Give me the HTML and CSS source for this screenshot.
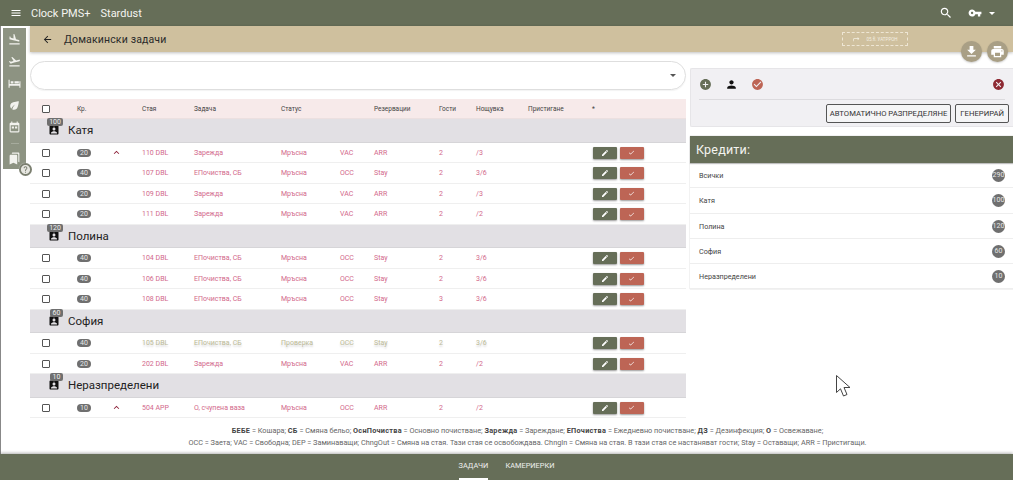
FILE: index.html
```html
<!DOCTYPE html>
<html lang="bg">
<head>
<meta charset="utf-8">
<title>Домакински задачи</title>
<link rel="stylesheet" href="styles.css">
</head>
<body>
<svg class="defs" width="0" height="0" aria-hidden="true">
<symbol id="i-menu" viewBox="0 0 24 24"><path d="M3 18h18v-2H3v2zm0-5h18v-2H3v2zm0-7v2h18V6H3z"/></symbol>
<symbol id="i-search" viewBox="0 0 24 24"><path d="M15.5 14h-.79l-.28-.27C15.41 12.59 16 11.11 16 9.5 16 5.91 13.09 3 9.5 3S3 5.91 3 9.5 5.91 16 9.5 16c1.61 0 3.09-.59 4.23-1.57l.27.28v.79l5 4.99L20.49 19l-4.99-5zm-6 0C7.01 14 5 11.99 5 9.5S7.01 5 9.5 5 14 7.01 14 9.5 11.99 14 9.5 14z"/></symbol>
<symbol id="i-key" viewBox="0 0 24 24"><path d="M12.65 10C11.83 7.67 9.61 6 7 6c-3.31 0-6 2.69-6 6s2.69 6 6 6c2.61 0 4.83-1.67 5.65-4H17v4h4v-4h2v-4H12.65zM7 14c-1.1 0-2-.9-2-2s.9-2 2-2 2 .9 2 2-.9 2-2 2z"/></symbol>
<symbol id="i-land" viewBox="0 0 24 24"><path d="M2.5 19h19v2h-19zm7.18-5.73l4.35 1.16 5.31 1.42c.8.21 1.62-.26 1.84-1.06.21-.8-.26-1.62-1.06-1.84l-5.31-1.42-2.76-9.02L10.12 2v8.28L5.15 8.95l-.93-2.32-1.45-.39v5.17l1.6.43 5.31 1.43z"/></symbol>
<symbol id="i-takeoff" viewBox="0 0 24 24"><path d="M2.5 19h19v2h-19zm19.57-9.36c-.21-.8-1.04-1.28-1.84-1.06L14.92 10l-6.9-6.43-1.93.51 4.14 7.17-4.97 1.33-1.97-1.54-1.45.39 1.82 3.16.77 1.33 1.6-.43 5.31-1.42 4.35-1.16L21 11.49c.81-.23 1.28-1.05 1.07-1.85z"/></symbol>
<symbol id="i-bed" viewBox="0 0 24 24"><path d="M1 5h2v8h18V8h2v12h-2v-4H3v4H1zM5 8h5v4H5zM12 8h8v4h-8z"/></symbol>
<symbol id="i-eco" viewBox="0 0 24 24"><path d="M6.050 8.050c-2.730 2.730-2.730 7.150-.02 9.880 1.470-3.400 4.090-6.240 7.360-7.930-2.770 2.340-4.710 5.610-5.390 9.320 2.600 1.230 5.800.78 7.950-1.370C19.430 14.470 20 4 20 4S9.530 4.570 6.050 8.050z"/></symbol>
<symbol id="i-event" viewBox="0 0 24 24"><path d="M19 3h-1V1h-2v2H8V1H6v2H5c-1.110 0-2 .9-2 2v14c0 1.100.89 2 2 2h14c1.100 0 2-.9 2-2V5c0-1.100-.9-2-2-2zm0 16H5V8h14v11zM7 10h4v4H7zm6 0h4v4h-4z"/></symbol>
<symbol id="i-book" viewBox="0 0 24 24"><path d="M19 18l2 1V3c0-1.100-.9-2-2-2H8.990C7.890 1 7 1.900 7 3h10c1.100 0 2 .9 2 2v13zM15 5H5c-1.100 0-2 .9-2 2v16l7-3 7 3V7c0-1.100-.9-2-2-2z"/></symbol>
<symbol id="i-help" viewBox="0 0 24 24"><path d="M12 2C6.480 2 2 6.480 2 12s4.480 10 10 10 10-4.480 10-10S17.520 2 12 2zm1 17h-2v-2h2v2zm2.070-7.750l-.9.92C13.450 12.900 13 13.500 13 15h-2v-.5c0-1.100.45-2.100 1.170-2.830l1.240-1.260c.37-.36.59-.86.59-1.410 0-1.100-.9-2-2-2s-2 .9-2 2H8c0-2.210 1.790-4 4-4s4 1.790 4 4c0 .88-.36 1.680-.93 2.250z"/></symbol>
<symbol id="i-back" viewBox="0 0 24 24"><path d="M20 11H7.830l5.590-5.590L12 4l-8 8 8 8 1.410-1.410L7.830 13H20v-2z"/></symbol>
<symbol id="i-turn" viewBox="0 0 24 24"><path d="M3 19v-5c0-2.200 1.800-4 4-4h10V6l5 5-5 5v-4H7c-1.100 0-2 .9-2 2v5z"/></symbol>
<symbol id="i-get" viewBox="0 0 24 24"><path d="M19 9h-4V3H9v6H5l7 7 7-7zM5 18v2h14v-2H5z"/></symbol>
<symbol id="i-print" viewBox="0 0 24 24"><path d="M19 8H5c-1.660 0-3 1.340-3 3v6h4v4h12v-4h4v-6c0-1.660-1.340-3-3-3zm-3 11H8v-5h8v5zm3-7c-.55 0-1-.45-1-1s.45-1 1-1 1 .45 1 1-.45 1-1 1zm-1-9H6v4h12V3z"/></symbol>
<symbol id="i-add" viewBox="0 0 24 24"><path d="M12 2C6.480 2 2 6.480 2 12s4.480 10 10 10 10-4.480 10-10S17.520 2 12 2zm5 11h-4v4h-2v-4H7v-2h4V7h2v4h4v2z"/></symbol>
<symbol id="i-person" viewBox="0 0 24 24"><path d="M12 12c2.210 0 4-1.790 4-4s-1.790-4-4-4-4 1.790-4 4 1.790 4 4 4zm0 2c-2.670 0-8 1.340-8 4v2h16v-2c0-2.660-5.330-4-8-4z"/></symbol>
<symbol id="i-okc" viewBox="0 0 24 24"><path d="M12 2C6.480 2 2 6.480 2 12s4.480 10 10 10 10-4.480 10-10S17.520 2 12 2zm-2 15l-5-5 1.410-1.410L10 14.170l7.590-7.590L19 8l-9 9z"/></symbol>
<symbol id="i-cancel" viewBox="0 0 24 24"><path d="M12 2C6.470 2 2 6.470 2 12s4.470 10 10 10 10-4.470 10-10S17.530 2 12 2zm5 13.590L15.590 17 12 13.410 8.410 17 7 15.590 10.590 12 7 8.410 8.410 7 12 10.590 15.590 7 17 8.410 13.410 12 17 15.590z"/></symbol>
<symbol id="i-up" viewBox="0 0 24 24"><path d="M12 8l-6 6 1.410 1.410L12 10.830l4.590 4.580L18 14z"/></symbol>
<symbol id="i-edit" viewBox="0 0 24 24"><path d="M3 17.250V21h3.750L17.810 9.940l-3.750-3.750L3 17.250zM20.710 7.040c.39-.39.39-1.020 0-1.410l-2.340-2.340c-.39-.39-1.020-.39-1.410 0l-1.830 1.830 3.750 3.750 1.830-1.830z"/></symbol>
<symbol id="i-check" viewBox="0 0 24 24"><path d="M9 16.170L4.830 12l-1.420 1.410L9 19 21 7l-1.410-1.410z"/></symbol>
<symbol id="i-assign" viewBox="0 0 24 24"><path d="M19 3h-4.180C14.400 1.840 13.300 1 12 1c-1.300 0-2.400.84-2.820 2H5c-1.100 0-2 .9-2 2v14c0 1.100.9 2 2 2h14c1.100 0 2-.9 2-2V5c0-1.100-.9-2-2-2zm-7 0c.55 0 1 .45 1 1s-.45 1-1 1-1-.45-1-1 .45-1 1-1zm0 4c1.660 0 3 1.340 3 3s-1.340 3-3 3-3-1.340-3-3 1.340-3 3-3zm6 12H6v-1.400c0-2 4-3.100 6-3.100s6 1.100 6 3.100V19z"/></symbol>
</svg>

<header class="topbar">
  <svg class="ico ico-menu"><use href="#i-menu"/></svg>
  <span class="brand">Clock PMS+</span>
  <span class="brand brand-hotel">Stardust</span>
  <span class="spacer"></span>
  <svg class="ico ico-search"><use href="#i-search"/></svg>
  <svg class="ico ico-key"><use href="#i-key"/></svg>
  <span class="caret caret-white"></span>
</header>

<div class="shell">
  <nav class="rail-wrap">
    <div class="rail">
      <svg class="ico"><use href="#i-land"/></svg>
      <svg class="ico"><use href="#i-takeoff"/></svg>
      <svg class="ico"><use href="#i-bed"/></svg>
      <svg class="ico"><use href="#i-eco"/></svg>
      <svg class="ico"><use href="#i-event"/></svg>
      <span class="rail-sep"></span>
      <svg class="ico"><use href="#i-book"/></svg>
      <span class="rail-help"><svg class="ico-help"><use href="#i-help"/></svg></span>
    </div>
  </nav>

  <div class="page">
    <div class="subbar">
      <svg class="ico ico-back"><use href="#i-back"/></svg>
      <h1 class="title">Домакински задачи</h1>
      <span class="spacer"></span>
      <span class="version"><svg class="ico-turn"><use href="#i-turn"/></svg>05.fl. УАТРРОН</span>
    </div>
    <div class="fabs">
      <span class="fab"><svg class="ico"><use href="#i-get"/></svg></span>
      <span class="fab"><svg class="ico"><use href="#i-print"/></svg></span>
    </div>

    <div class="columns">
      <main class="left">
        <div class="select"><span class="caret caret-dark"></span></div>
        <div class="table">
          <div class="row head">
            <span class="box"></span><span>Кр.</span><span></span><span>Стая</span><span>Задача</span><span>Статус</span><span></span><span>Резервации</span><span>Гости</span><span>Нощувка</span><span>Пристигане</span><span>*</span>
          </div>

          <div class="group"><span class="g-icon"><svg class="ico"><use href="#i-assign"/></svg><b class="g-badge">100</b></span>Катя</div>
          <div class="row"><span class="box"></span><span><b class="pill">20</b></span><span><svg class="chev"><use href="#i-up"/></svg></span><span>110 DBL</span><span>Зарежда</span><span>Мръсна</span><span>VAC</span><span>ARR</span><span>2</span><span>/3</span><span></span><span class="acts"><span class="btn btn-edit"><svg><use href="#i-edit"/></svg></span><span class="btn btn-ok"><svg><use href="#i-check"/></svg></span></span></div>
          <div class="row"><span class="box"></span><span><b class="pill">40</b></span><span></span><span>107 DBL</span><span>ЕПочиства, СБ</span><span>Мръсна</span><span>OCC</span><span>Stay</span><span>2</span><span>3/6</span><span></span><span class="acts"><span class="btn btn-edit"><svg><use href="#i-edit"/></svg></span><span class="btn btn-ok"><svg><use href="#i-check"/></svg></span></span></div>
          <div class="row"><span class="box"></span><span><b class="pill">20</b></span><span></span><span>109 DBL</span><span>Зарежда</span><span>Мръсна</span><span>VAC</span><span>ARR</span><span>2</span><span>/3</span><span></span><span class="acts"><span class="btn btn-edit"><svg><use href="#i-edit"/></svg></span><span class="btn btn-ok"><svg><use href="#i-check"/></svg></span></span></div>
          <div class="row"><span class="box"></span><span><b class="pill">20</b></span><span></span><span>111 DBL</span><span>Зарежда</span><span>Мръсна</span><span>VAC</span><span>ARR</span><span>2</span><span>/2</span><span></span><span class="acts"><span class="btn btn-edit"><svg><use href="#i-edit"/></svg></span><span class="btn btn-ok"><svg><use href="#i-check"/></svg></span></span></div>

          <div class="group"><span class="g-icon"><svg class="ico"><use href="#i-assign"/></svg><b class="g-badge">120</b></span>Полина</div>
          <div class="row"><span class="box"></span><span><b class="pill">40</b></span><span></span><span>104 DBL</span><span>ЕПочиства, СБ</span><span>Мръсна</span><span>OCC</span><span>Stay</span><span>2</span><span>3/6</span><span></span><span class="acts"><span class="btn btn-edit"><svg><use href="#i-edit"/></svg></span><span class="btn btn-ok"><svg><use href="#i-check"/></svg></span></span></div>
          <div class="row"><span class="box"></span><span><b class="pill">40</b></span><span></span><span>106 DBL</span><span>ЕПочиства, СБ</span><span>Мръсна</span><span>OCC</span><span>Stay</span><span>2</span><span>3/6</span><span></span><span class="acts"><span class="btn btn-edit"><svg><use href="#i-edit"/></svg></span><span class="btn btn-ok"><svg><use href="#i-check"/></svg></span></span></div>
          <div class="row"><span class="box"></span><span><b class="pill">40</b></span><span></span><span>108 DBL</span><span>ЕПочиства, СБ</span><span>Мръсна</span><span>OCC</span><span>Stay</span><span>3</span><span>3/6</span><span></span><span class="acts"><span class="btn btn-edit"><svg><use href="#i-edit"/></svg></span><span class="btn btn-ok"><svg><use href="#i-check"/></svg></span></span></div>

          <div class="group"><span class="g-icon"><svg class="ico"><use href="#i-assign"/></svg><b class="g-badge">60</b></span>София</div>
          <div class="row row-check"><span class="box"></span><span><b class="pill">40</b></span><span></span><span>105 DBL</span><span>ЕПочиства, СБ</span><span>Проверка</span><span>OCC</span><span>Stay</span><span>2</span><span>3/6</span><span></span><span class="acts"><span class="btn btn-edit"><svg><use href="#i-edit"/></svg></span><span class="btn btn-ok"><svg><use href="#i-check"/></svg></span></span></div>
          <div class="row"><span class="box"></span><span><b class="pill">20</b></span><span></span><span>202 DBL</span><span>Зарежда</span><span>Мръсна</span><span>VAC</span><span>ARR</span><span>2</span><span>/2</span><span></span><span class="acts"><span class="btn btn-edit"><svg><use href="#i-edit"/></svg></span><span class="btn btn-ok"><svg><use href="#i-check"/></svg></span></span></div>

          <div class="group"><span class="g-icon"><svg class="ico"><use href="#i-assign"/></svg><b class="g-badge">10</b></span>Неразпределени</div>
          <div class="row"><span class="box"></span><span><b class="pill">10</b></span><span><svg class="chev"><use href="#i-up"/></svg></span><span>504 APP</span><span>О, счупена ваза</span><span>Мръсна</span><span>OCC</span><span>ARR</span><span>2</span><span>/2</span><span></span><span class="acts"><span class="btn btn-edit"><svg><use href="#i-edit"/></svg></span><span class="btn btn-ok"><svg><use href="#i-check"/></svg></span></span></div>
        </div>
      </main>

      <aside class="right">
        <div class="tools">
          <div class="tool-icons">
            <svg class="tool c-add"><use href="#i-add"/></svg>
            <svg class="tool c-person"><use href="#i-person"/></svg>
            <svg class="tool c-ok"><use href="#i-okc"/></svg>
            <span class="spacer"></span>
            <svg class="tool c-cancel"><use href="#i-cancel"/></svg>
          </div>
          <div class="tool-btns">
            <button class="outline">АВТОМАТИЧНО РАЗПРЕДЕЛЯНЕ</button>
            <button class="outline outline-gen">ГЕНЕРИРАЙ</button>
          </div>
        </div>
        <div class="credits">
          <div class="credits-head">Кредити:</div>
          <div class="credit"><span>Всички</span><b class="dot">290</b></div>
          <div class="credit"><span>Катя</span><b class="dot">100</b></div>
          <div class="credit"><span>Полина</span><b class="dot">120</b></div>
          <div class="credit"><span>София</span><b class="dot">60</b></div>
          <div class="credit"><span>Неразпределени</span><b class="dot">10</b></div>
        </div>
      </aside>
    </div>

    <div class="legend">
      <p><b>БЕБЕ</b> = Кошара; <b>СБ</b> = Смяна бельо; <b>ОснПочиства</b> = Основно почистване; <b>Зарежда</b> = Зареждане; <b>ЕПочиства</b> = Ежедневно почистване; <b>ДЗ</b> = Дезинфекция; <b>О</b> = Освежаване;</p>
      <p>OCC = Заета; VAC = Свободна; DEP = Заминаващи; ChngOut = Смяна на стая. Тази стая се освобождава. ChngIn = Смяна на стая. В тази стая се настаняват гости; Stay = Оставащи; ARR = Пристигащи.</p>
    </div>
  </div>
</div>

<footer class="tabs">
  <span class="tab tab-on">ЗАДАЧИ</span>
  <span class="tab">КАМЕРИЕРКИ</span>
</footer>

<svg class="pointer" width="18" height="24" viewBox="0 0 18 24" aria-hidden="true"><path d="M1.500 1.500V18.500L5.500 14.800L8.500 22L12 20.500L9 13.500H15z" fill="#fff" stroke="#444" stroke-width="1" stroke-linejoin="round"/></svg>
</body>
</html>
```
FILE: styles.css
```css
* { box-sizing: border-box; }
html, body { margin: 0; height: 480px; overflow: hidden; }
html { background: #fff; }
body {
  position: relative;
  display: flex;
  flex-direction: column;
  width: 1013px;
  font-family: Roboto, "Liberation Sans", sans-serif;
  background: #fff;
  color: #333;
  opacity: .999;
}
.defs { position: absolute; }
.spacer { flex: 1; }
.ico { width: 100%; height: 100%; fill: currentColor; display: block; }

.topbar {
  height: 26px;
  flex: none;
  display: flex;
  align-items: center;
  background: #666e58;
  color: #fff;
  padding: 0 17px 0 10px;
}
.ico-menu { width: 12px; height: 12px; margin-right: 9px; }
.brand { font-size: 11px; color: #f4f4f0; }
.brand-hotel { margin-left: 10px; }
.ico-search { width: 14px; height: 14px; margin-right: 15px; }
.ico-key { width: 14px; height: 14px; margin-right: 7px; }
.caret { width: 0; height: 0; border-left: 3px solid transparent; border-right: 3px solid transparent; border-top: 3px solid #fff; }
.caret-white { margin-right: 1px; }
.caret-dark { border-top-color: #555; }

.shell { flex: 1; display: flex; min-height: 0; border-left: 1px solid #888; }
.rail-wrap { width: 29px; flex: none; padding: 2px 0 0 2px; }
.rail {
  position: relative;
  width: 23px;
  height: 141px;
  background: #8d9382;
  color: #f2f2ee;
  display: flex;
  flex-direction: column;
  align-items: center;
  padding-top: 4.500px;
  gap: 9px;
}
.rail .ico { width: 13px; height: 13px; flex: none; }
.rail-sep { width: 8px; height: 1px; background: #a6ab9d; flex: none; margin-bottom: -1px; }
.rail-help {
  position: absolute;
  right: -5.500px;
  bottom: -7px;
  width: 13px;
  height: 13px;
  border-radius: 50%;
  background: #7b7f70;
  box-shadow: 0 0 1px rgba(255,255,255,.8);
  display: flex;
  align-items: center;
  justify-content: center;
}
.ico-help { width: 11px; height: 11px; fill: #e6e6e0; }

.page { flex: 1; min-width: 0; display: flex; flex-direction: column; position: relative; }
.subbar {
  height: 26px;
  flex: none;
  display: flex;
  align-items: center;
  background: #cfc09e;
  box-shadow: 0 1px 3px rgba(0,0,0,.25);
  padding: 0 105px 0 12px;
}
.ico-back { width: 11px; height: 11px; color: #222; margin-right: 11px; }
.title { margin: 0; font-size: 10.500px; font-weight: 400; color: #2a2a2a; letter-spacing: .15px; }
.version {
  width: 66px;
  height: 14px;
  border: 1px dashed #eee6d4;
  border-radius: 1px;
  color: #f4efe2;
  font-size: 4.500px;
  display: flex;
  align-items: center;
  justify-content: center;
  gap: 6px;
}
.ico-turn { width: 8px; height: 8px; fill: #f4efe2; }
.fabs { position: absolute; top: 15px; right: 5px; display: flex; gap: 5px; }
.fab {
  width: 21px;
  height: 21px;
  border-radius: 50%;
  background: #a99f85;
  color: #fff;
  padding: 3px;
  box-shadow: 0 1px 2px rgba(0,0,0,.2);
}

.columns { display: flex; gap: 4px; flex: 1; min-height: 0; }
.left { width: 656px; flex: none; padding-top: 9px; }
.select {
  height: 29px;
  border: 1px solid #dedede;
  border-radius: 15px;
  display: flex;
  align-items: center;
  justify-content: flex-end;
  padding-right: 9px;
  margin-bottom: 9px;
  box-shadow: 0 1px 1px rgba(0,0,0,.05);
}

.table { display: flex; flex-direction: column; }
.row {
  display: grid;
  grid-template-columns: 35px 39px 26px 52px 87px 59px 34px 65px 37px 52px 64px 1fr;
  align-items: center;
  height: 20.500px;
  padding-left: 12px;
  padding-top: 1px;
  font-size: 7px;
  color: #d2688a;
  border-bottom: 1px solid #efefef;
}
.head {
  height: 20px;
  padding-top: 0;
  background: #f7eaea;
  color: #444;
  font-size: 6.500px;
  border-bottom: 1px solid #ece0e0;
}
.row-check { color: #bdbb97; text-shadow: 0 2px 2px rgba(0,0,0,.18); }
.box { width: 8px; height: 8px; border: 1px solid #555; border-radius: 1px; background: #fff; }
.pill {
  display: block;
  width: 14px;
  height: 8px;
  border-radius: 4px;
  background: #6f6f6f;
  color: #e8e8e8;
  font-size: 7px;
  font-weight: 400;
  line-height: 8px;
  text-align: center;
  text-shadow: none;
}
.chev { display: block; width: 11px; height: 11px; fill: #8a1c35; margin-left: -5.500px; }
.acts { display: flex; gap: 2.500px; margin-left: 1px; text-shadow: none; }
.btn {
  width: 24px;
  height: 12px;
  border-radius: 1px;
  display: flex;
  align-items: center;
  justify-content: center;
  box-shadow: 0 1px 2px rgba(0,0,0,.4);
}
.btn svg { width: 8px; height: 8px; fill: #fff; }
.btn-edit { background: #666e58; }
.btn-ok { background: #bd6555; }
.btn-ok svg { width: 7px; height: 7px; }

.group {
  height: 23.500px;
  background: #e2e0e4;
  display: flex;
  align-items: center;
  padding-left: 18px;
  font-size: 11.500px;
  color: #222;
  border-bottom: 1px solid #d6d5d8;
}
.g-icon { position: relative; width: 12px; height: 12px; margin-right: 8px; color: #111; }
.g-badge {
  position: absolute;
  top: -6px;
  right: -3px;
  min-width: 13px;
  padding: 0 2px;
  height: 8px;
  border-radius: 2px;
  background: #6f6f6f;
  color: #eee;
  font-size: 7px;
  font-weight: 400;
  line-height: 8px;
  text-align: center;
}

.right { flex: 1; min-width: 0; padding-top: 16px; }
.tools {
  height: 59px;
  background: #f1f0f3;
  border: 1px solid #e6e5e8;
  border-right: 0;
  border-radius: 2px 0 0 2px;
  padding: 0 8.500px 0 8px;
  margin-bottom: 9px;
}
.tool-icons {
  height: 31px;
  display: flex;
  align-items: center;
  gap: 13px;
  border-bottom: 1px solid #dcdbde;
}
.tool { width: 13px; height: 13px; }
.c-add { fill: #666e58; }
.c-person { fill: #111; }
.c-ok { fill: #bd6555; }
.c-cancel { fill: #8e2a33; }
.tool-btns { display: flex; justify-content: flex-end; gap: 4px; padding-top: 4px; margin-right: -4.500px; }
.outline {
  height: 19px;
  padding: 0 3px;
  background: #f5f5f6;
  border: 1px solid #555;
  border-radius: 2px;
  font: 7.700px Roboto, sans-serif;
  color: #333;
}
.outline-gen { padding: 0 4px; }
.credits { box-shadow: 0 0 1px rgba(0,0,0,.3); }
.credits-head {
  height: 27px;
  background: #666e58;
  color: #f4f4f0;
  font-size: 12.500px;
  display: flex;
  align-items: center;
  padding-left: 6px;
  letter-spacing: .2px;
  box-shadow: 0 1px 1px rgba(0,0,0,.25);
}
.credit {
  height: 25.300px;
  display: flex;
  align-items: center;
  justify-content: space-between;
  padding: 1px 8px 0 9px;
  font-size: 7.200px;
  color: #444;
  border-bottom: 1px solid #eeeeee;
}
.dot {
  width: 13px;
  height: 13px;
  border-radius: 50%;
  background: #6f6f6f;
  color: #e8e8e8;
  font-size: 7px;
  font-weight: 400;
  line-height: 13px;
  text-align: center;
}

.legend {
  position: absolute;
  left: 12px;
  right: 0;
  bottom: 6px;
  text-align: center;
  font-size: 7.300px;
  color: #666;
  line-height: 11.500px;
}
.legend p { margin: 0; }
.legend b { color: #444; letter-spacing: .25px; }

.tabs {
  height: 26px;
  flex: none;
  background: #666e58;
  box-shadow: 0 -1px 3px rgba(0,0,0,.3);
  display: flex;
  justify-content: center;
  gap: 17px;
  color: #eee;
  font-size: 7.400px;
  position: relative;
}
.tab { height: 26px; line-height: 24px; }
.tab-on { border-bottom: 2px solid #fff; }

.pointer { position: absolute; left: 835px; top: 373.500px; }
```
